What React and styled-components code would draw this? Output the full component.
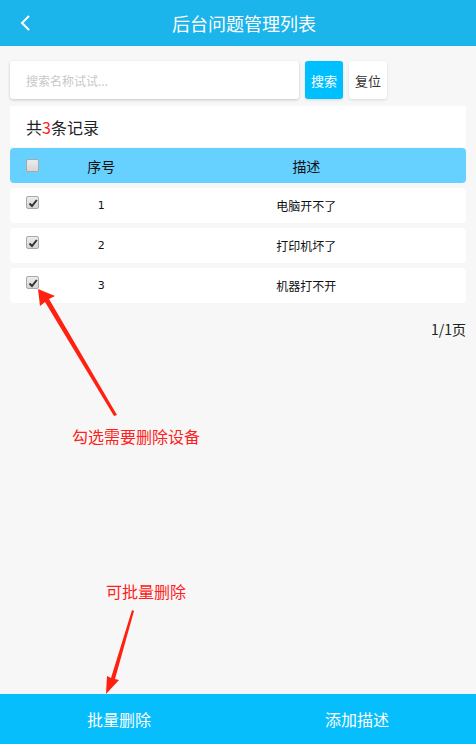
import React from 'react';
import styled, { createGlobalStyle } from 'styled-components';

const GlobalStyle = createGlobalStyle`
  html, body {
    margin: 0;
    padding: 0;
    background: #f7f7f7;
    font-family: "Noto Sans CJK SC", "Noto Sans", sans-serif;
  }
`;

const Page = styled.div`
  position: relative;
  width: 476px;
  height: 744px;
  display: flex;
  flex-direction: column;
  background: #f7f7f7;
  overflow: hidden;
`;

const Header = styled.div`
  height: 46px;
  background: #1bb4eb;
  display: flex;
  align-items: center;
  justify-content: center;
  position: relative;
  padding-left: 12px;
  color: #fff;
  font-size: 18px;
`;

const Back = styled.div`
  position: absolute;
  left: 18px;
  top: 13px;
  display: flex;
`;

const Content = styled.div`
  flex: 1;
  padding: 15px 10px 0;
  display: flex;
  flex-direction: column;
`;

const SearchRow = styled.div`
  display: flex;
  gap: 6px;
  height: 38px;
`;

const SearchInput = styled.div`
  width: 289px;
  background: #fff;
  border-radius: 3px;
  box-shadow: 0 1px 3px rgba(0, 0, 0, 0.2);
  display: flex;
  align-items: center;
  padding-left: 16px;
  box-sizing: border-box;
  color: #c8c8c8;
  font-size: 12px;
`;

const Btn = styled.div`
  width: 38px;
  border-radius: 3px;
  display: flex;
  align-items: center;
  justify-content: center;
  font-size: 13px;
  background: ${(p) => (p.primary ? '#00bfff' : '#fff')};
  color: ${(p) => (p.primary ? '#fff' : '#333')};
  box-shadow: 0 1px 3px rgba(0, 0, 0, 0.12);
`;

const CountCard = styled.div`
  margin-top: 7px;
  height: 41px;
  background: #fff;
  display: flex;
  align-items: center;
  padding-left: 16px;
  font-size: 16px;
  color: #222;
`;

const Red = styled.span`
  color: #ff1a1a;
`;

const TableRow = styled.div`
  display: grid;
  grid-template-columns: 10% 20% 70%;
  height: 35px;
  margin-top: ${(p) => (p.head ? '1px' : '5px')};
  border-radius: 4px;
  background: ${(p) => (p.head ? '#66d0ff' : '#fff')};
  font-size: ${(p) => (p.head ? '14px' : '12px')};
  color: #111;
`;

const Cell = styled.div`
  display: flex;
  align-items: ${(p) => (p.top ? 'flex-start' : 'center')};
  justify-content: center;
  padding-top: ${(p) => (p.top ? '8px' : '0')};
`;

const Num = styled.span`
  font-family: "DejaVu Sans", sans-serif;
  font-size: 11px;
`;

const Box = styled.span`
  width: 11px;
  height: 11px;
  border: 1px solid #a9a9a9;
  border-radius: 2px;
  background: linear-gradient(#ececec, #d6d6d6);
  display: flex;
  align-items: center;
  justify-content: center;
  box-sizing: content-box;
`;

const Check = ({ on }) => (
  <Box>
    {on && (
      <svg width="10" height="10" viewBox="0 0 10 10">
        <path d="M1.5 5.5 L4 8 L8.8 2" stroke="#333" strokeWidth="2" fill="none" />
      </svg>
    )}
  </Box>
);

const Pager = styled.div`
  text-align: right;
  font-size: 14px;
  color: #222;
  margin-top: 16px;
`;

const Footer = styled.div`
  height: 50px;
  background: #06befc;
  display: grid;
  grid-template-columns: 1fr 1fr;
  color: #fff;
  font-size: 16px;
`;

const FootBtn = styled.div`
  display: flex;
  align-items: center;
  justify-content: center;
`;

const Note = styled.div`
  position: absolute;
  left: ${(p) => p.x}px;
  top: ${(p) => p.y}px;
  color: #ff2020;
  font-size: 16px;
`;

const Overlay = styled.svg`
  position: absolute;
  left: 0;
  top: 0;
  pointer-events: none;
`;

const rows = [
  { id: 1, desc: '电脑开不了' },
  { id: 2, desc: '打印机坏了' },
  { id: 3, desc: '机器打不开' },
];

const App = () => (
  <Page>
    <GlobalStyle />
    <Header>
      <Back>
        <svg width="16" height="20" viewBox="0 0 16 20">
          <path d="M11 3 L4 10 L11 17" stroke="#fff" strokeWidth="2" fill="none" />
        </svg>
      </Back>
      后台问题管理列表
    </Header>
    <Content>
      <SearchRow>
        <SearchInput>搜索名称试试...</SearchInput>
        <Btn primary>搜索</Btn>
        <Btn>复位</Btn>
      </SearchRow>
      <CountCard>
        共<Red>3</Red>条记录
      </CountCard>
      <TableRow head>
        <Cell><Check /></Cell>
        <Cell>序号</Cell>
        <Cell>描述</Cell>
      </TableRow>
      {rows.map((r) => (
        <TableRow key={r.id}>
          <Cell top><Check on /></Cell>
          <Cell><Num>{r.id}</Num></Cell>
          <Cell>{r.desc}</Cell>
        </TableRow>
      ))}
      <Pager>1/1页</Pager>
    </Content>
    <Footer>
      <FootBtn>批量删除</FootBtn>
      <FootBtn>添加描述</FootBtn>
    </Footer>

    <Note x={72} y={424}>勾选需要删除设备</Note>
    <Note x={106} y={579}>可批量删除</Note>
    <Overlay width="476" height="744">
      <polygon points="38,289 55,296 49,299 117,415 114,416 45,302 40,306" fill="#ff2010" />
      <polygon points="106,694 107,676 111,678 132,610 134,611 115,679 119,680" fill="#ff2010" />
    </Overlay>
  </Page>
);

export default App;
